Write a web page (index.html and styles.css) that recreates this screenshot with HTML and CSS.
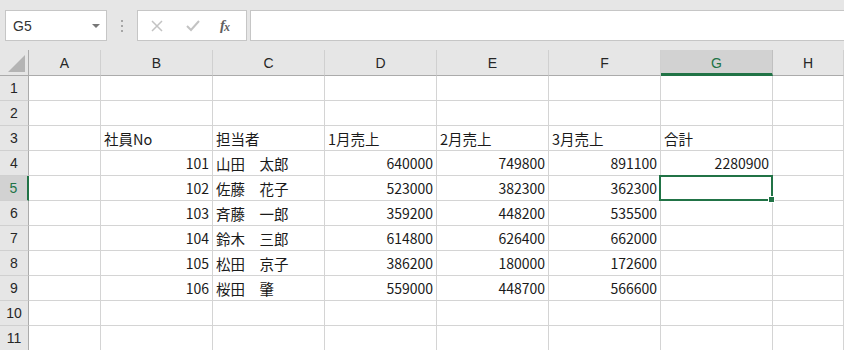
FILE: index.html
```html
<!DOCTYPE html>
<html lang="ja">
<head>
    <meta charset="UTF-8">
    <title>Book1 - Excel</title>
    <link rel="stylesheet" href="styles.css">
</head>
<body>
    <div class="toolbar">
        <div class="name-box">
            <span class="name-value">G5</span>
            <span class="name-arrow"></span>
        </div>
        <div class="grip">
            <span></span><span></span><span></span>
        </div>
        <div class="formula-buttons">
            <svg class="btn-icon" width="12" height="12" viewBox="0 0 12 12">
                <path d="M1 1 L11 11 M11 1 L1 11" stroke="#c3c3c3" stroke-width="1.5" fill="none"/>
            </svg>
            <svg class="btn-icon" width="14" height="12" viewBox="0 0 14 12">
                <path d="M1 6 L5 10 L13 1" stroke="#c3c3c3" stroke-width="2" fill="none"/>
            </svg>
            <span class="fx">f<span class="fx-x">x</span></span>
        </div>
        <div class="formula-input"></div>
    </div>

    <div class="sheet" id="sheet">
        <div class="selection"><span class="fill-handle"></span></div>
    </div>

    <script>
    const sheet = document.getElementById('sheet');
    const columns = ['A', 'B', 'C', 'D', 'E', 'F', 'G', 'H'];
    const rows = [
        [],
        [],
        ['', '社員No', '担当者', '1月売上', '2月売上', '3月売上', '合計'],
        ['', 101, '山田　太郎', 640000, 749800, 891100, 2280900],
        ['', 102, '佐藤　花子', 523000, 382300, 362300],
        ['', 103, '斉藤　一郎', 359200, 448200, 535500],
        ['', 104, '鈴木　三郎', 614800, 626400, 662000],
        ['', 105, '松田　京子', 386200, 180000, 172600],
        ['', 106, '桜田　肇', 559000, 448700, 566600],
        [],
        []
    ];
    const activeCol = 'G';
    const activeRow = 5;

    function addCell(className, text) {
        const div = document.createElement('div');
        div.className = className;
        div.textContent = text;
        sheet.appendChild(div);
    }

    addCell('corner', '');
    columns.forEach(col => {
        addCell(col === activeCol ? 'col-head active' : 'col-head', col);
    });

    rows.forEach((row, i) => {
        const rowNum = i + 1;
        addCell(rowNum === activeRow ? 'row-head active' : 'row-head', rowNum);
        columns.forEach((col, j) => {
            const value = row[j];
            if (typeof value === 'number') {
                addCell('cell num', value);
            } else {
                addCell('cell', value || '');
            }
        });
    });
    </script>
</body>
</html>
```

FILE: styles.css
```css
body {
    margin: 0;
    background-color: #e6e6e6;
    font-family: "Noto Sans CJK JP", "Noto Sans", sans-serif;
    color: #1a1a1a;
    overflow: hidden;
}

.toolbar {
    height: 50px;
    display: flex;
    align-items: flex-start;
    padding-top: 10px;
    box-sizing: border-box;
}

.name-box {
    margin-left: 5px;
    width: 102px;
    height: 31px;
    box-sizing: border-box;
    background-color: #fff;
    border: 1px solid #c6c6c6;
    display: flex;
    align-items: center;
    justify-content: space-between;
    padding: 0 6px 0 7px;
}

.name-value {
    font-family: "Liberation Sans", Arial, sans-serif;
    font-size: 14px;
    color: #333;
}

.name-arrow {
    width: 0;
    height: 0;
    border-left: 4px solid transparent;
    border-right: 4px solid transparent;
    border-top: 4px solid #777;
}

.grip {
    width: 30px;
    height: 31px;
    display: flex;
    flex-direction: column;
    align-items: center;
    justify-content: center;
    gap: 3px;
}

.grip span {
    width: 2px;
    height: 2px;
    background-color: #a6a6a6;
}

.formula-buttons {
    width: 110px;
    height: 31px;
    box-sizing: border-box;
    background-color: #fff;
    border: 1px solid #c6c6c6;
    display: flex;
    align-items: center;
    padding-left: 13px;
    gap: 23px;
}

.fx {
    font-family: "Liberation Serif", "Times New Roman", serif;
    font-style: italic;
    font-weight: bold;
    font-size: 15px;
    color: #606060;
    margin-left: -3px;
    letter-spacing: -1px;
}

.fx-x {
    font-size: 12px;
    position: relative;
    top: 1px;
}

.formula-input {
    flex: 1;
    margin-left: 3px;
    height: 31px;
    box-sizing: border-box;
    background-color: #fff;
    border: 1px solid #c6c6c6;
    border-right: none;
}

.sheet {
    position: relative;
    display: grid;
    grid-template-columns: 29px 72px repeat(6, 112px) 1fr;
    grid-template-rows: 26px;
    grid-auto-rows: 25px;
    background-color: #fff;
    font-size: 14.5px;
}

.corner,
.col-head,
.row-head {
    background-color: #e6e6e6;
    color: #262626;
    box-sizing: border-box;
    display: flex;
    align-items: center;
    justify-content: center;
    font-size: 14px;
}

.corner {
    position: relative;
    border-right: 1px solid #ababab;
    border-bottom: 1px solid #ababab;
}

.corner::after {
    content: "";
    position: absolute;
    right: 3px;
    bottom: 3px;
    width: 0;
    height: 0;
    border-left: 17px solid transparent;
    border-bottom: 17px solid #b4b4b4;
}

.col-head {
    border-right: 1px solid #d0d0d0;
    border-bottom: 1px solid #ababab;
    font-family: "Liberation Sans", Arial, sans-serif;
    padding-top: 1px;
}

.col-head.active {
    background-color: #d2d2d2;
    color: #217346;
    border-right-color: #c0c0c0;
    border-bottom: 3px solid #217346;
    padding-top: 3px;
}

.row-head {
    border-right: 1px solid #ababab;
    border-bottom: 1px solid #d0d0d0;
    font-family: "Liberation Sans", Arial, sans-serif;
}

.row-head.active {
    background-color: #d2d2d2;
    color: #217346;
    border-right: 2px solid #217346;
}

.cell {
    box-sizing: border-box;
    border-right: 1px solid #d4d4d4;
    border-bottom: 1px solid #d4d4d4;
    padding: 0 3px;
    display: flex;
    align-items: center;
    white-space: nowrap;
    overflow: hidden;
}

.cell.num {
    justify-content: flex-end;
    font-size: 14px;
}

.selection {
    position: absolute;
    left: 659px;
    top: 125px;
    width: 114px;
    height: 26px;
    box-sizing: border-box;
    border: 2px solid #217346;
    pointer-events: none;
}

.fill-handle {
    position: absolute;
    right: -4px;
    bottom: -4px;
    width: 5px;
    height: 5px;
    background-color: #217346;
    border: 1px solid #fff;
}
```
